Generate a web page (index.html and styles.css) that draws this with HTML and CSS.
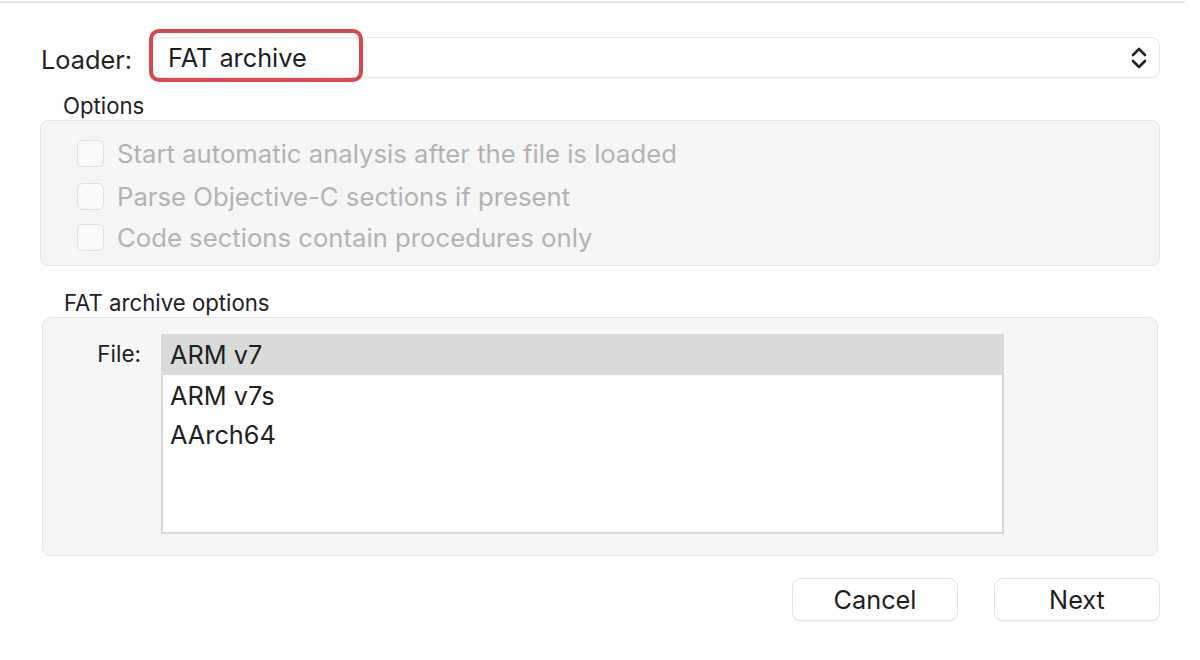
FILE: index.html
```html
<!DOCTYPE html>
<html>
<head>
<meta charset="utf-8">
<link rel="stylesheet" href="styles.css">
</head>
<body>
<div class="topline"></div>
<div class="dialog">
  <div class="loader-row">
    <span class="loader-label">Loader:</span>
    <div class="select">
      <span class="select-value">FAT archive</span>
      <svg class="chevrons" width="16" height="24" viewBox="0 0 16 24">
        <path d="M2 9 L8 3 L14 9" fill="none" stroke="#222" stroke-width="2.6" stroke-linecap="round" stroke-linejoin="round"/>
        <path d="M2 15 L8 21 L14 15" fill="none" stroke="#222" stroke-width="2.6" stroke-linecap="round" stroke-linejoin="round"/>
      </svg>
      <div class="highlight"></div>
    </div>
  </div>

  <div class="group-title options-title">Options</div>
  <div class="box options-box">
    <div class="check-row"><span class="checkbox"></span><span class="check-label">Start automatic analysis after the file is loaded</span></div>
    <div class="check-row"><span class="checkbox"></span><span class="check-label">Parse Objective-C sections if present</span></div>
    <div class="check-row"><span class="checkbox"></span><span class="check-label">Code sections contain procedures only</span></div>
  </div>

  <div class="group-title fat-title">FAT archive options</div>
  <div class="box fat-box">
    <span class="file-label">File:</span>
    <div class="list">
      <div class="list-row selected">ARM v7</div>
      <div class="list-row">ARM v7s</div>
      <div class="list-row">AArch64</div>
    </div>
  </div>

  <div class="buttons">
    <button class="btn">Cancel</button>
    <button class="btn">Next</button>
  </div>
</div>

<span class="wm" style="left:553px; top:290px">简书：Style_月月</span>
<span class="wm" style="left:650px; top:535px">简书：Style_月月</span>
<span class="wm" style="left:80px; top:614px">简书：Style_月月</span>
</body>
</html>
```
FILE: styles.css
```css
html, body {
  margin: 0;
  padding: 0;
  background: #ffffff;
}
body {
  width: 1200px;
  height: 660px;
  overflow: hidden;
  font-family: "Inter", "Noto Sans CJK SC", sans-serif;
  color: #222222;
  position: relative;
}
.topline {
  width: 1185px;
  height: 1px;
  border-bottom: 2px solid #e2e2e2;
  border-bottom-right-radius: 6px;
}
.dialog {
  padding: 0 40px 0 40px;
  width: 1120px;
}
.loader-row {
  display: flex;
  align-items: center;
  margin-top: 35px;
  height: 39px;
}
.loader-label {
  font-size: 25.3px;
  width: 109px;
  padding-left: 1px;
  position: relative;
  top: 2px;
}
.select {
  position: relative;
  flex: 1;
  margin-right: 1px;
  height: 39px;
  background: #fff;
  border-radius: 8px;
  box-shadow: 0 0 0 1px #e6e6e6, 0 1px 2px rgba(0,0,0,0.18);
  display: flex;
  align-items: center;
  justify-content: space-between;
  padding: 0 12px 0 18px;
}
.select-value {
  font-size: 25.3px;
  color: #1e1e1e;
}
.chevrons {
  display: block;
}
.highlight {
  position: absolute;
  left: -1px;
  top: -9px;
  width: 206px;
  height: 45px;
  border: 4px solid #d9484e;
  border-radius: 10px;
}
.group-title {
  font-size: 22.2px;
  color: #222;
  line-height: 24px;
}
.options-title {
  margin-top: 17px;
  padding-left: 23px;
}
.box {
  background: #f6f6f6;
  border: 1px solid #e6e6e6;
  border-radius: 8px;
}
.options-box {
  margin-top: 2px;
  height: 126px;
  padding: 10px 0 8px 36px;
}
.check-row {
  display: flex;
  align-items: center;
  height: 44px;
}
.check-row:nth-child(2) { height: 42px; }
.check-row:nth-child(3) { height: 40px; }
.checkbox {
  width: 25px;
  height: 25px;
  border: 1px solid #e0e0e0;
  border-radius: 6px;
  background: #fafafa;
  margin-right: 13px;
}
.check-label {
  font-size: 25.7px;
  color: #b3b3b3;
}
.fat-title {
  margin-top: 25px;
  padding-left: 24px;
}
.fat-box {
  margin: 2px 2px 0 2px;
  height: 201px;
  padding: 16px 0 20px 0;
  display: flex;
  align-items: flex-start;
}
.file-label {
  font-size: 22.5px;
  width: 98px;
  text-align: right;
  margin-top: 6px;
  margin-right: 20px;
  color: #222;
}
.list {
  margin-left: 0;
  width: 839px;
  height: 198px;
  background: #fff;
  border: 2px solid #d8d8d8;
  border-top: none;
}
.list-row {
  height: 39px;
  line-height: 42px;
  padding-left: 7px;
  font-size: 25.3px;
  color: #1f1f1f;
}
.list-row.selected {
  background: #dadada;
  margin: 0 -2px;
  padding-left: 9px;
  height: 41px;
}
.buttons {
  display: flex;
  justify-content: flex-end;
  gap: 38px;
  margin-top: 23px;
  padding-right: 1px;
}
.btn {
  width: 164px;
  height: 41px;
  background: #fff;
  border: none;
  border-radius: 8px;
  box-shadow: 0 0 0 1px #e3e3e3, 0 1px 2px rgba(0,0,0,0.2);
  font-family: "Inter", sans-serif;
  font-size: 25.3px;
  color: #1e1e1e;
  padding: 0;
}
.wm {
  position: absolute;
  font-family: "Noto Sans CJK SC", "Liberation Sans", sans-serif;
  font-size: 40px;
  line-height: 40px;
  white-space: nowrap;
  color: rgba(0, 0, 0, 0.022);
  transform-origin: 0 100%;
  transform: rotate(-25deg);
  pointer-events: none;
}
```
